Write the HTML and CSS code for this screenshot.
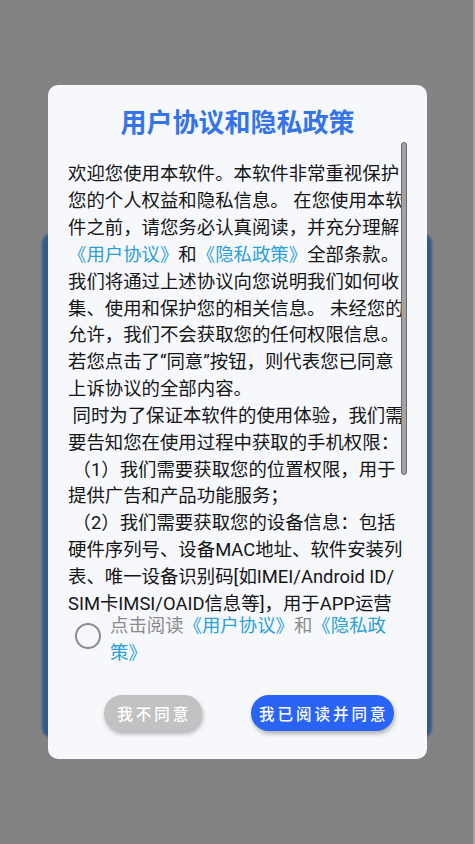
FILE: index.html
```html
<!DOCTYPE html>
<html lang="zh-CN">
<head>
<meta charset="utf-8">
<title>用户协议和隐私政策</title>
<link rel="stylesheet" href="styles.css">
</head>
<body>
<div class="screen">
  <div class="under-card"></div>
</div>
<div class="modal">
  <div class="dialog">
    <h1 class="title">用户协议和隐私政策</h1>
    <div class="scroll-wrap">
      <div class="scroll">
        <p class="body">欢迎您使用本软件。本软件非常重视保护<br>您的个人权益和隐私信息。 在您使用本软<br>件之前，请您务必认真阅读，并充分理解<br><span class="link">《用户协议》</span>和<span class="link">《隐私政策》</span>全部条款。<br>我们将通过上述协议向您说明我们如何收<br>集、使用和保护您的相关信息。 未经您的<br>允许，我们不会获取您的任何权限信息。<br>若您点击了“同意”按钮，则代表您已同意<br>上诉协议的全部内容。<br>&nbsp;同时为了保证本软件的使用体验，我们需<br>要告知您在使用过程中获取的手机权限：<br>&nbsp;（1）我们需要获取您的位置权限，用于<br>提供广告和产品功能服务；<br>&nbsp;（2）我们需要获取您的设备信息：包括<br>硬件序列号、设备MAC地址、软件安装列<br>表、唯一设备识别码[如IMEI/Android ID/<br>SIM卡IMSI/OAID信息等]，用于APP运营</p>
      </div>
      <div class="thumb"></div>
    </div>
    <label class="consent">
      <span class="radio"></span>
      <span class="consent-text">点击阅读<span class="link">《用户协议》</span>和<span class="link">《隐私政策》</span></span>
    </label>
    <div class="actions">
      <div class="cell"><button class="btn btn-decline">我不同意</button></div>
      <div class="cell"><button class="btn btn-accept">我已阅读并同意</button></div>
    </div>
  </div>
</div>
</body>
</html>
```
FILE: styles.css
```css
html, body {
  margin: 0;
  padding: 0;
}
body {
  width: 475px;
  height: 844px;
  background: #838383;
  overflow: hidden;
  font-family: Roboto, "Noto Sans CJK SC", sans-serif;
  box-shadow: inset -2px 0 0 #a2a2a2;
}
.screen {
  padding-top: 233px;
  padding-left: 42px;
}
.under-card {
  width: 390px;
  height: 505px;
  border-radius: 10px;
  background: #34598a;
  filter: blur(1px);
}
.modal {
  position: fixed;
  inset: 0;
  display: flex;
  align-items: center;
  justify-content: center;
}
.dialog {
  width: 379px;
  box-sizing: border-box;
  padding: 21px 20px 28px;
  background: #f6f8fc;
  border-radius: 10px;
}
.title {
  margin: 0;
  font-size: 26px;
  line-height: 34px;
  font-weight: 700;
  color: #3574e8;
  text-align: center;
}
.scroll-wrap {
  position: relative;
  margin-top: 2px;
  margin-right: -1px;
}
.scroll {
  height: 471px;
  overflow: hidden;
}
.thumb {
  position: absolute;
  top: 0;
  right: 1px;
  width: 6px;
  height: 333px;
  box-sizing: border-box;
  background: #a3a3a3;
  border: 1px solid #6a6a6a;
  border-radius: 3px;
}
.body {
  margin: 0;
  padding: 19px 0 0;
  font-size: 18.4px;
  line-height: 26.85px;
  color: #151515;
  white-space: nowrap;
}
.link {
  color: #2ba0d6;
}
.consent {
  display: flex;
  align-items: flex-start;
  gap: 9px;
  padding-left: 7px;
}
.radio {
  flex: 0 0 auto;
  width: 26px;
  height: 26px;
  box-sizing: border-box;
  margin-top: 10px;
  border: 2.5px solid #8b8b8b;
  border-radius: 50%;
}
.consent-text {
  width: 284px;
  font-size: 18.4px;
  line-height: 26.7px;
  color: #8a8a8a;
}
.actions {
  display: flex;
  margin-top: 28px;
}
.cell {
  flex: 1 1 0;
  display: flex;
  justify-content: center;
}
.btn {
  height: 36px;
  border: 0;
  border-radius: 18px;
  padding: 0 0 0 3px;
  font-family: Roboto, "Noto Sans CJK SC", sans-serif;
  font-size: 15.5px;
  font-weight: 500;
  letter-spacing: 3px;
  color: #ffffff;
  box-shadow: 1px 3px 4px rgba(0, 0, 0, 0.28);
}
.btn-decline {
  width: 98px;
  background: #c2c2c2;
}
.btn-accept {
  width: 143px;
  background: #2a64f6;
}
```
